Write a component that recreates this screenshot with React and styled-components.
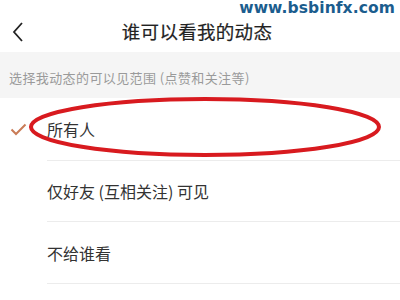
import React from 'react';
import styled, { createGlobalStyle } from 'styled-components';

const GlobalStyle = createGlobalStyle`
  html, body {
    margin: 0;
    padding: 0;
    background: #fff;
  }
  body {
    font-family: "Noto Sans CJK SC", "Noto Sans", sans-serif;
  }
`;

const Screen = styled.div`
  position: relative;
  width: 400px;
  height: 300px;
  overflow: hidden;
  background: #fff;
`;

const Watermark = styled.div`
  position: absolute;
  top: 0;
  right: 5px;
  font-family: "DejaVu Sans", sans-serif;
  font-weight: 700;
  font-size: 15.5px;
  line-height: 16px;
  color: #1b5d8e;
  letter-spacing: 0.1px;
  z-index: 3;
`;

const Header = styled.div`
  display: flex;
  align-items: center;
  justify-content: center;
  position: relative;
  height: 52px;
  padding: 10px 6px 0 0;
  box-sizing: border-box;
`;

const Back = styled.svg`
  position: absolute;
  left: 11px;
  top: 21px;
`;

const Title = styled.h1`
  margin: 0;
  font-size: 18.5px;
  font-weight: 400;
  color: #222;
  letter-spacing: 0.3px;
  -webkit-text-stroke: 0.2px #222;
`;

const Hint = styled.div`
  display: flex;
  align-items: center;
  height: 46px;
  padding: 4px 0 0 9px;
  box-sizing: border-box;
  background: #f5f5f5;
  font-size: 13px;
  letter-spacing: 0.4px;
  color: #9a9a9a;
`;

const List = styled.div`
  position: relative;
  display: flex;
  flex-direction: column;
`;

const Row = styled.div`
  display: flex;
  align-items: center;
  height: ${p => p.$h}px;
`;

const Mark = styled.div`
  width: 47px;
  display: flex;
  justify-content: center;
  padding-right: 11px;
  box-sizing: border-box;
`;

const Label = styled.div`
  flex: 1;
  align-self: stretch;
  display: flex;
  align-items: center;
  border-bottom: 1px solid #ececec;
  font-size: 16px;
  color: #333;
`;

const Circle = styled.svg`
  position: absolute;
  left: 0;
  top: -5px;
  pointer-events: none;
`;

const rows = [
  { label: '所有人', checked: true, h: 63 },
  { label: '仅好友 (互相关注) 可见', h: 61 },
  { label: '不给谁看', h: 62 },
];

export default function App() {
  return (
    <Screen>
      <GlobalStyle />
      <Watermark>www.bsbinfx.com</Watermark>
      <Header>
        <Back width="14" height="22" viewBox="0 0 14 22">
          <path d="M11 2 L3 11 L11 20" fill="none" stroke="#222" strokeWidth="1.8" />
        </Back>
        <Title>谁可以看我的动态</Title>
      </Header>
      <Hint>选择我动态的可以见范围 (点赞和关注等)</Hint>
      <List>
        {rows.map(r => (
          <Row key={r.label} $h={r.h}>
            <Mark>
              {r.checked && (
                <svg width="17" height="13" viewBox="0 0 17 13">
                  <path d="M1.5 6.5 L6 11 L15.5 1.5" fill="none" stroke="#c97b56" strokeWidth="2" />
                </svg>
              )}
            </Mark>
            <Label>{r.label}</Label>
          </Row>
        ))}
        <Circle width="400" height="70" viewBox="0 0 400 70">
          <ellipse cx="205" cy="34" rx="174" ry="28" fill="none" stroke="#d81a1f" strokeWidth="4" />
        </Circle>
      </List>
    </Screen>
  );
}
